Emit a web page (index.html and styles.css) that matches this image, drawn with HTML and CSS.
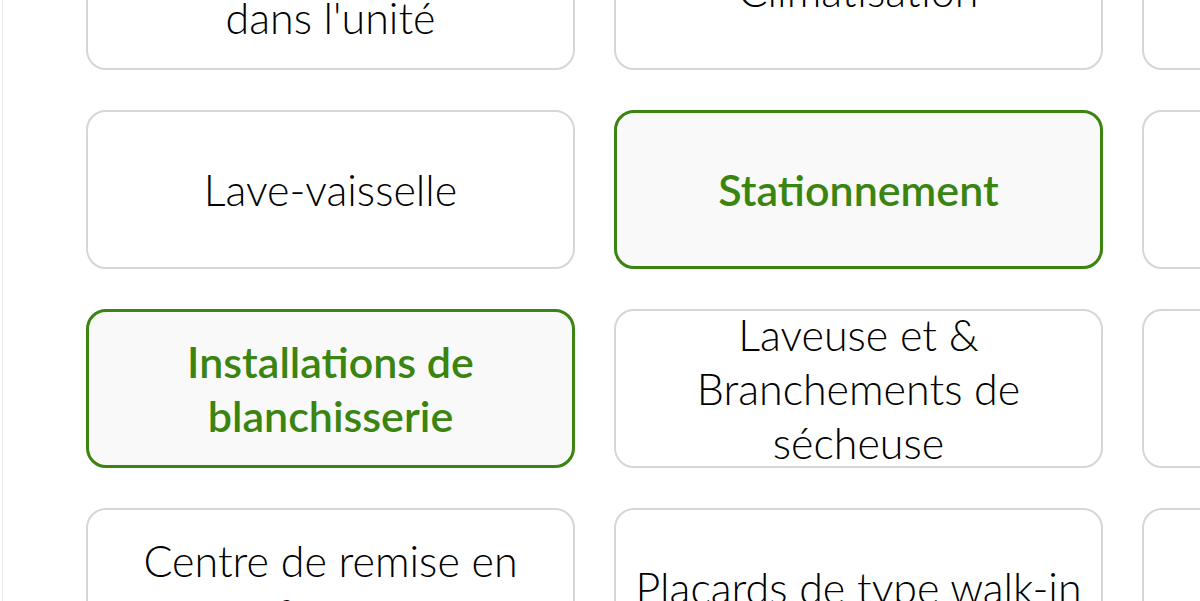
FILE: index.html
```html
<!DOCTYPE html>
<html lang="fr">
<head>
<meta charset="utf-8">
<title>Commodités</title>
<link rel="stylesheet" href="styles.css">
</head>
<body>
<div class="panel">
  <div class="grid">
    <button class="chip">Laveuse-sécheuse<br>dans l'unité</button>
    <button class="chip">Climatisation</button>
    <button class="chip">Balcon</button>

    <button class="chip">Lave-vaisselle</button>
    <button class="chip selected">Stationnement</button>
    <button class="chip">Piscine</button>

    <button class="chip selected">Installations de blanchisserie</button>
    <button class="chip">Laveuse et &amp; Branchements de sécheuse</button>
    <button class="chip">Ascenseur</button>

    <button class="chip">Centre de remise en forme</button>
    <button class="chip">Placards de type walk-in</button>
    <button class="chip">Terrasse</button>
  </div>
</div>
</body>
</html>
```
FILE: styles.css
```css
html, body {
  margin: 0;
  padding: 0;
  background: #ffffff;
  overflow: hidden;
}
body {
  height: 601px;
  padding-left: 2px;
}
.panel {
  height: 100%;
  border-left: 1px solid #ececec;
  padding-left: 83px;
  overflow: hidden;
}
.grid {
  display: grid;
  grid-template-columns: repeat(3, 489px);
  grid-auto-rows: 159px;
  column-gap: 39px;
  row-gap: 40px;
  margin-top: -89px;
}
.chip {
  box-sizing: border-box;
  display: flex;
  align-items: center;
  justify-content: center;
  padding: 0 12px;
  background: #ffffff;
  border: 2px solid #d6d6d6;
  border-radius: 20px;
  font-family: Lato, "Noto Sans", sans-serif;
  font-size: 43px;
  font-weight: 300;
  line-height: 54px;
  color: #000000;
  text-align: center;
  overflow: visible;
}
.chip.selected {
  border: 3px solid #3a8410;
  background: #f9f9f9;
  color: #3a8410;
  font-weight: 600;
}
```
